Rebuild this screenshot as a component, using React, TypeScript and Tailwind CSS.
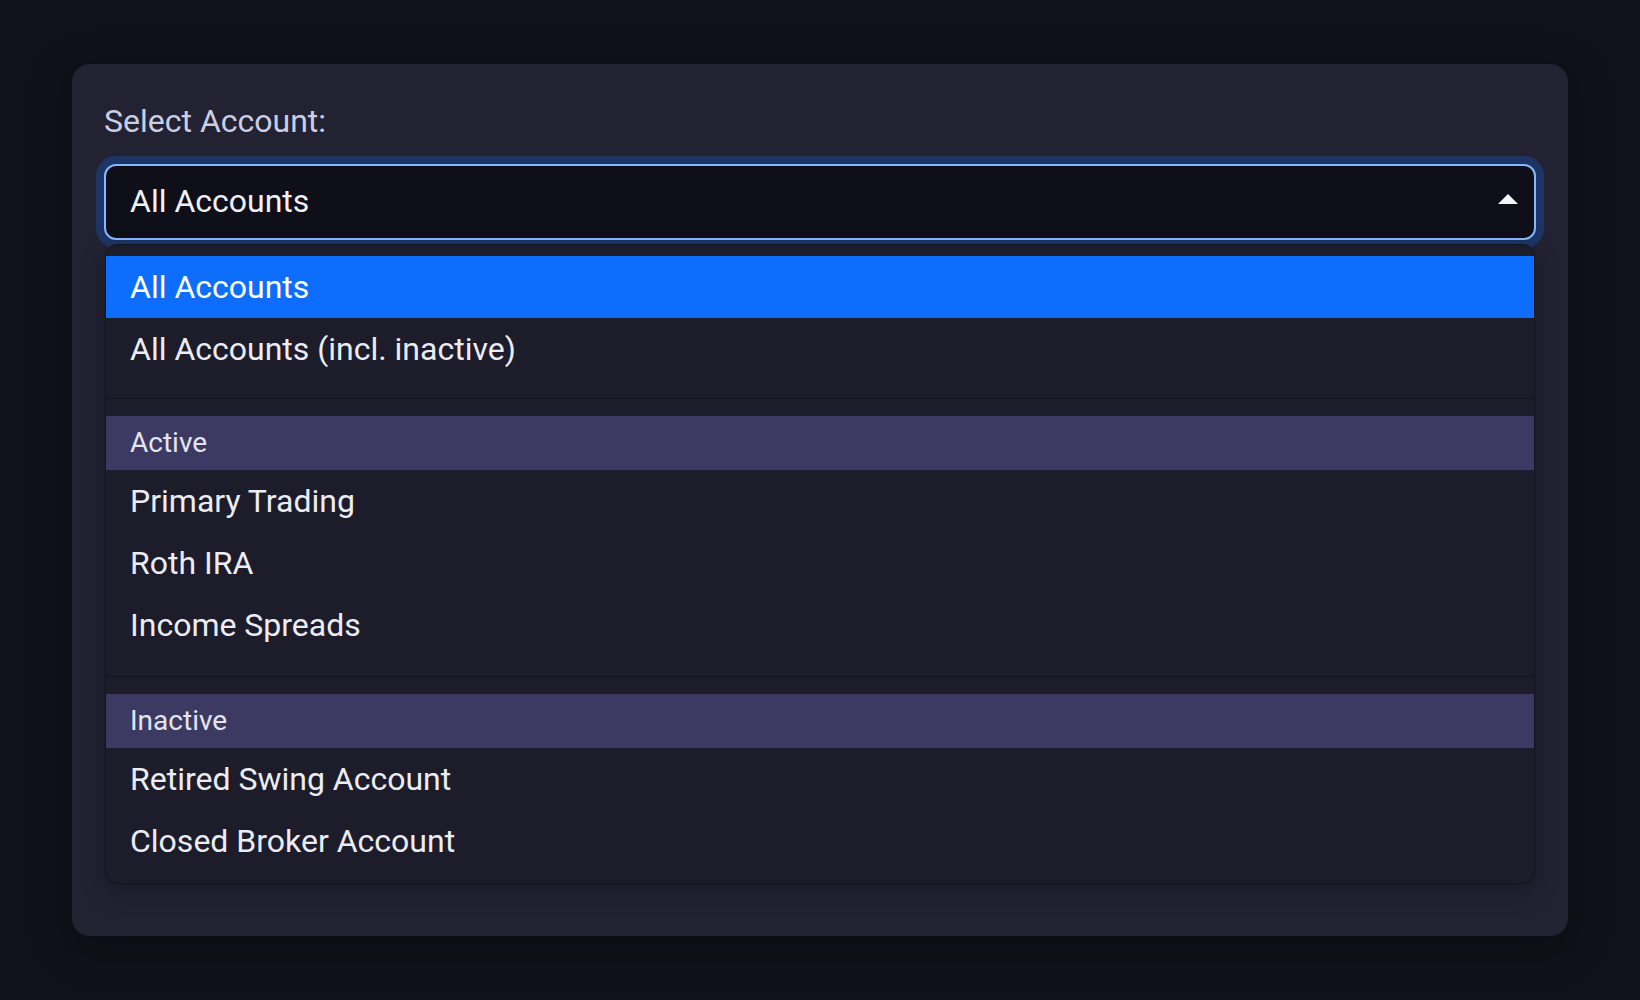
export default function App() {
  const font = { fontFamily: "Roboto, 'Noto Sans', sans-serif" };

  return (
    <div
      className="min-h-screen w-full bg-[#11111b] px-[72px] pt-[64px]"
      style={font}
    >
      <div className="rounded-[18px] bg-[#222233] px-8 pt-[33px] pb-[52px] shadow-[0_10px_40px_rgba(0,0,0,0.35)]">
        <label className="mb-[19px] block text-[32px] leading-[48px] text-[#cbcfe4]">
          Select Account:
        </label>

        {/* select box, open */}
        <div className="flex h-[76px] items-center justify-between rounded-[12px] border-2 border-[#86b7fe] bg-[#0f0f19] pl-6 pr-4 shadow-[0_0_0_8px_rgba(13,110,253,0.25)]">
          <span className="-mt-[2px] text-[32px] leading-none text-[#f1f1f6]">All Accounts</span>
          <svg width="20" height="10" viewBox="0 0 20 10" className="-mt-[6px]">
            <polygon points="10,0 20,10 0,10" fill="#f4f4f8" />
          </svg>
        </div>

        {/* dropdown list */}
        <div className="mx-px mt-1 rounded-[12px] border border-[#13131d] bg-[#1c1c2b] py-[11px] shadow-[0_8px_24px_rgba(0,0,0,0.25)]">
          <div className="flex h-[62px] items-center bg-[#0d6efd] px-6 text-[32px] text-white">
            All Accounts
          </div>
          <Row>All Accounts (incl. inactive)</Row>

          <div className="mt-[18px] mb-[17px] h-px bg-[#13131d]" />

          <Header>Active</Header>
          <Row>Primary Trading</Row>
          <Row>Roth IRA</Row>
          <Row>Income Spreads</Row>

          <div className="mt-[20px] mb-[17px] h-px bg-[#13131d]" />

          <Header>Inactive</Header>
          <Row>Retired Swing Account</Row>
          <Row>Closed Broker Account</Row>
        </div>
      </div>
    </div>
  );
}

function Row({ children }: { children: React.ReactNode }) {
  return (
    <div className="flex h-[62px] items-center px-6 text-[32px] text-[#ececf3]">
      {children}
    </div>
  );
}

function Header({ children }: { children: React.ReactNode }) {
  return (
    <div className="flex h-[54px] items-center bg-[#3c3a63] px-6 text-[28px] text-[#e4e4f0]">
      {children}
    </div>
  );
}
